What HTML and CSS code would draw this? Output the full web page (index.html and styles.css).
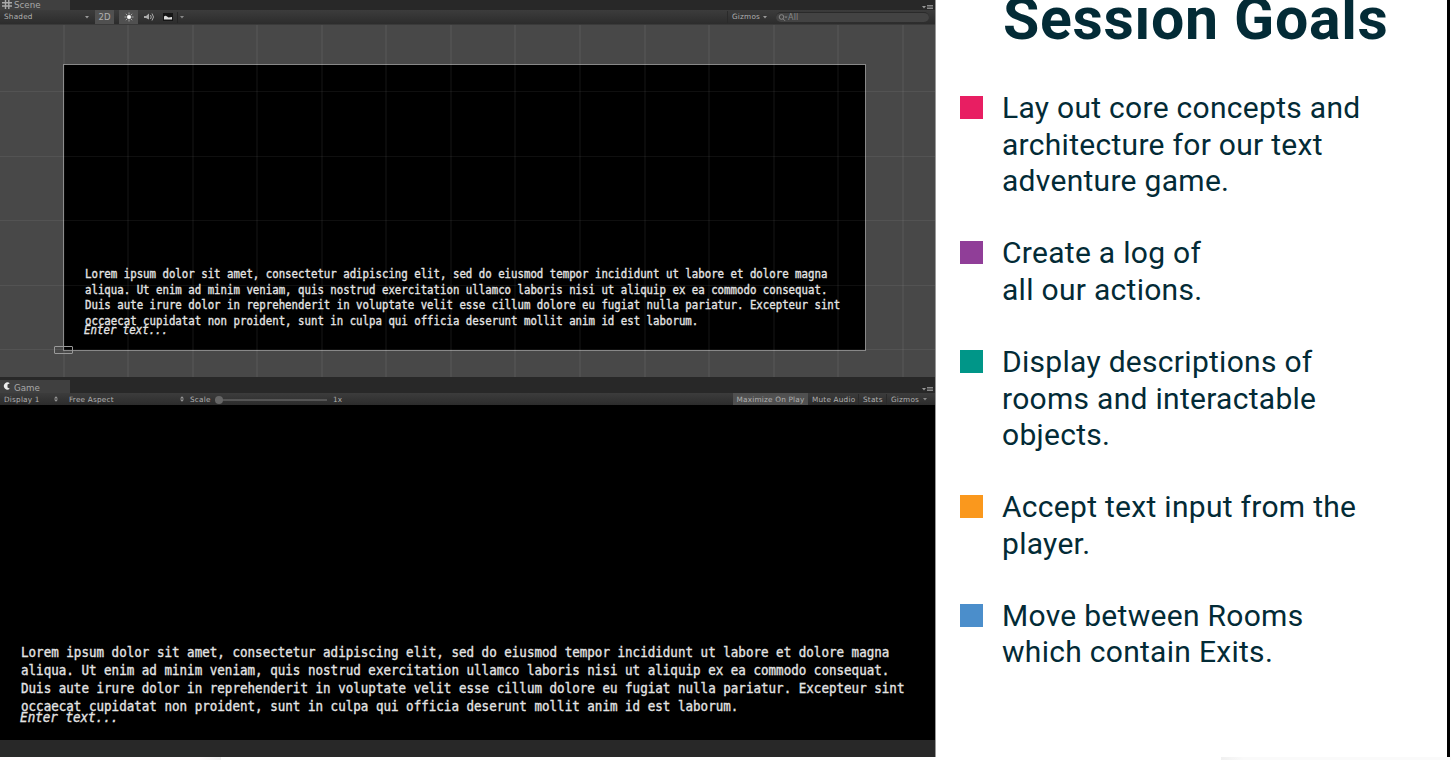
FILE: index.html
```html
<!DOCTYPE html>
<html lang="en">
<head>
<meta charset="utf-8">
<title>Session Goals</title>
<link rel="stylesheet" href="styles.css">
</head>
<body>
<div class="stage">
  <main class="editor">
    <section class="scene">
      <div class="tabs scene-tabs">
        <div class="tab"><svg class="tab-icon" width="10" height="10" viewBox="0 0 10 10"><path d="M3.500 0v9M6.800 0v9M0 2.700h10M0 6h10" stroke="#aaa" stroke-width="1.400"/></svg><span class="tab-name">Scene</span></div>
        <svg class="menu-icon" width="12" height="6" viewBox="0 0 12 6"><path d="M1 2h4L3 4.500z" fill="#999"/><path d="M6 1.500h6M6 3h6M6 4.500h6" stroke="#888"/></svg>
      </div>
      <div class="bar scene-bar">
        <span class="cell shaded">Shaded</span>
        <svg class="arrow" width="4" height="3" viewBox="0 0 4 3"><path d="M0 0h4L2 2.500z" fill="#999"/></svg>
        <span class="cell on two-d">2D</span>
        <span class="cell on sun"><svg width="10" height="10" viewBox="0 0 10 10"><circle cx="5" cy="5" r="2" fill="#fff"/><path d="M5 .5v2M5 7.500v2M.5 5h2M7.500 5h2M1.800 1.800l1.400 1.400M6.800 6.800l1.400 1.400M8.200 1.800L6.800 3.200M1.800 8.200l1.400-1.400" stroke="#bbb" stroke-width=".8"/></svg></span>
        <svg class="speaker" width="11" height="10" viewBox="0 0 11 10"><path d="M0 4h2l3-2.500v6L2 6H0z" fill="#aaa"/><path d="M6.500 3q1.500 2 0 4M8 1.500q3 3.500 0 7" fill="none" stroke="#aaa"/></svg>
        <svg class="image" width="10" height="8" viewBox="0 0 10 8"><rect width="10" height="8" fill="#151515"/><path d="M1 6.500V3.500q1.500-1.500 3 0l1.500 1L9 4v2.500z" fill="#ddd"/></svg>
        <i class="sep"></i>
        <svg class="arrow" width="4" height="3" viewBox="0 0 4 3"><path d="M0 0h4L2 2.500z" fill="#888"/></svg>
        <span class="cell gizmos">Gizmos</span>
        <svg class="arrow gizmo-arrow" width="4" height="3" viewBox="0 0 4 3"><path d="M0 0h4L2 2.500z" fill="#999"/></svg>
        <span class="search"><svg width="10" height="8" viewBox="0 0 10 8"><circle cx="3.500" cy="3" r="2.300" fill="none" stroke="#888"/><path d="M5 4.800l2 2" stroke="#888"/><path d="M6.500 2.500h3L8 4.300z" fill="#888"/></svg>All</span>
      </div>
      <div class="viewport">
        <div class="canvas">
          <div class="copy small">
            <p>Lorem ipsum dolor sit amet, consectetur adipiscing elit, sed do eiusmod tempor incididunt ut labore et dolore magna<br>aliqua. Ut enim ad minim veniam, quis nostrud exercitation ullamco laboris nisi ut aliquip ex ea commodo consequat.<br>Duis aute irure dolor in reprehenderit in voluptate velit esse cillum dolore eu fugiat nulla pariatur. Excepteur sint<br>occaecat cupidatat non proident, sunt in culpa qui officia deserunt mollit anim id est laborum.</p>
            <p class="prompt">Enter text...</p>
          </div>
        </div>
        <div class="grid"></div>
        <div class="anchor"></div>
      </div>
    </section>
    <section class="game">
      <div class="tabs game-tabs">
        <div class="tab"><svg class="tab-icon" width="10" height="9" viewBox="0 0 10 9"><path d="M7.800 1.200A3.600 3.600 0 1 0 7.800 6.800L5.500 5.500v-3z" fill="#eee"/></svg><span class="tab-name">Game</span></div>
        <svg class="menu-icon" width="12" height="6" viewBox="0 0 12 6"><path d="M1 2h4L3 4.500z" fill="#999"/><path d="M6 1.500h6M6 3h6M6 4.500h6" stroke="#888"/></svg>
      </div>
      <div class="bar game-bar">
        <span class="cell display">Display 1</span>
        <svg class="updown" width="4" height="6" viewBox="0 0 4 6"><path d="M0 2.400h4L2 .3zM0 3.600h4L2 5.700z" fill="#999"/></svg>
        <span class="cell aspect">Free Aspect</span>
        <svg class="updown" width="4" height="6" viewBox="0 0 4 6"><path d="M0 2.400h4L2 .3zM0 3.600h4L2 5.700z" fill="#999"/></svg>
        <span class="cell scale">Scale</span>
        <span class="slider"><i class="knob"></i></span>
        <span class="cell">1x</span>
        <span class="cell on maximize">Maximize On Play</span>
        <span class="cell mute">Mute Audio</span>
        <span class="cell stats">Stats</span>
        <span class="cell giz">Gizmos</span>
        <svg class="arrow" width="4" height="3" viewBox="0 0 4 3"><path d="M0 0h4L2 2.500z" fill="#888"/></svg>
      </div>
      <div class="play">
        <div class="copy large">
          <p>Lorem ipsum dolor sit amet, consectetur adipiscing elit, sed do eiusmod tempor incididunt ut labore et dolore magna<br>aliqua. Ut enim ad minim veniam, quis nostrud exercitation ullamco laboris nisi ut aliquip ex ea commodo consequat.<br>Duis aute irure dolor in reprehenderit in voluptate velit esse cillum dolore eu fugiat nulla pariatur. Excepteur sint<br>occaecat cupidatat non proident, sunt in culpa qui officia deserunt mollit anim id est laborum.</p>
          <p class="prompt">Enter text...</p>
        </div>
      </div>
      <div class="status"></div>
    </section>
  </main>
  <aside class="goals">
    <h1>Sess<span class="stem">i</span>on Goals</h1>
    <ul>
      <li class="pink"><span>Lay out core concepts and<br>architecture for our text<br>adventure game.</span></li>
      <li class="purple"><span>Create a log of<br>all our actions.</span></li>
      <li class="teal"><span>Display descriptions of<br>rooms and interactable<br>objects.</span></li>
      <li class="orange"><span>Accept text input from the<br>player.</span></li>
      <li class="blue"><span>Move between Rooms<br>which contain Exits.</span></li>
    </ul>
  </aside>
</div>
<footer><div class="foot-left"></div><div class="foot-right"></div></footer>
</body>
</html>
```
FILE: styles.css
```css
* { box-sizing: border-box; }
body { margin: 0; width: 1451px; height: 760px; overflow: hidden; background: #fff; }
p, h1, ul { margin: 0; padding: 0; }
svg { flex: none; }
.stage { display: flex; width: 1450px; height: 757px; overflow: hidden; }
.editor { width: 936px; flex: none; border-right: 1px solid #999; background: #282828; }
.scene { height: 377px; }

.tabs { display: flex; justify-content: space-between; align-items: flex-end; background: #282828; }
.scene-tabs { height: 10px; }
.game-tabs { height: 16px; padding-top: 3px; }
.tab { display: flex; align-items: center; width: 70px; height: 100%; padding-left: 2px; background: #404040; color: #a8a8a8; font: 8.700px/10px "DejaVu Sans", sans-serif; }
.tab-name { margin-left: 2px; }
.game-tabs .tab-name { padding-top: 3px; }
.menu-icon { margin: 0 2px 0 0; }
.game-tabs .menu-icon { margin-bottom: 1px; }

.bar { display: flex; align-items: center; background: linear-gradient(#3c3c3c, #2c2c2c); color: #b0b0b0; font: 7.300px/12px "DejaVu Sans", sans-serif; letter-spacing: .2px; white-space: nowrap; }
.scene-bar { height: 14px; }
.game-bar { height: 12px; line-height: 10px; }
.game-bar .cell { padding-top: 1px; }
.cell { flex: none; padding-left: 4px; }
.bar .on { display: flex; align-items: center; justify-content: center; height: 100%; padding-left: 0; background: #505050; }
.shaded { width: 85px; }
.two-d { width: 19px; margin-left: 6px; font-size: 8.500px; letter-spacing: 0; }
.sun { width: 19px; margin-left: 5px; }
.speaker { margin-left: 6px; }
.image { margin-left: 8px; }
.sep { width: 1px; height: 11px; margin: 0 2px 0 4px; background: #252525; }
.gizmos { width: 36px; margin-left: 543px; border-left: 1px solid #2a2a2a; }
.search { display: flex; align-items: center; width: 153px; height: 10px; margin: 0 6px 0 auto; padding-left: 2px; border-radius: 5px; background: #434343; border-top: 1px solid #2a2a2a; color: #888; font-size: 8px; }

.viewport { position: relative; height: 353px; padding: 39px 0 0 63px; background: #484848; overflow: hidden; border-top: 1px solid #3a3a3a; }
.canvas { width: 803px; height: 287px; padding: 202px 0 0 21px; border: 1px solid #888; background: #000; }
.grid { position: absolute; inset: 0; background:
  repeating-linear-gradient(90deg, transparent 0 63.550px, rgba(255,255,255,.085) 63.550px 64.550px) -.5px 0,
  repeating-linear-gradient(180deg, transparent 0 63.500px, rgba(255,255,255,.06) 63.500px 64.500px) 0 3px; }
.anchor { position: absolute; left: 54px; top: 321px; width: 19px; height: 8px; border: 1px solid #999; border-radius: 1px; }

.copy { color: #e4e4e4; font-family: "DejaVu Sans Mono", monospace; white-space: nowrap; transform-origin: 0 0; -webkit-text-stroke: .35px #e4e4e4; }
.small { width: 860px; font-size: 12px; line-height: 15.600px; transform: scaleX(.8935); }
.large { width: 1000px; font-size: 13.700px; line-height: 18.150px; transform: scaleX(.9163); }
.prompt { margin-left: -1px; font-style: oblique; }
.small .prompt { margin-top: -6px; }
.large .prompt { margin-top: -7.500px; }

.display { width: 54px; }
.aspect { width: 115px; margin-left: 7px; }
.scale { width: 30px; padding-left: 6px; }
.slider { display: flex; align-items: center; width: 112px; height: 2px; margin: 1px 2px 0 1px; background: #555; }
.knob { width: 8px; height: 8px; border-radius: 50%; background: #666; }
.maximize { width: 75px; margin-left: auto; }
.mute { width: 50px; }
.stats { width: 28px; border-left: 1px solid #2a2a2a; }
.giz { width: 34px; border-left: 1px solid #2a2a2a; }
.game-bar .arrow { margin: 0 8px 0 3px; }
.play { height: 335px; padding: 238px 0 0 21px; background: #000; overflow: hidden; }

.goals { flex: 1; border-right: 3px solid #000; padding-left: 24px; background: #fff; color: #032b36; font-family: Roboto, sans-serif; white-space: nowrap; }
h1 { height: 90px; margin-left: 43px; margin-top: -15px; font-size: 59px; line-height: 68px; letter-spacing: .7px; }
/* The heading bleeds off the top edge; only the stem of the letter stays. */
.stem { display: inline-block; height: 68px; vertical-align: top; clip-path: inset(20px 0 0 0); }
ul { display: flex; flex-direction: column; gap: 36.270px; padding-top: 15px; list-style: none; }
li { display: flex; gap: 19px; font-size: 30px; line-height: 36.270px; letter-spacing: .29px; }
li span { padding-top: .4px; margin-bottom: -.4px; }
li::before { content: ""; flex: none; width: 23px; height: 23px; margin-top: 6px; background: var(--mark); }
.pink { --mark: #e81e62; }
.purple { --mark: #903e98; }
.teal { --mark: #009688; }
.orange { --mark: #fa981d; }
.blue { --mark: #4b8ecb; }
footer { display: flex; justify-content: space-between; height: 3px; }
.foot-left { width: 221px; background: linear-gradient(90deg, #fefafc 90%, #eee); }
.foot-right { width: 230px; background: linear-gradient(90deg, #f0f0f0, #fafafa 10%); }
```
